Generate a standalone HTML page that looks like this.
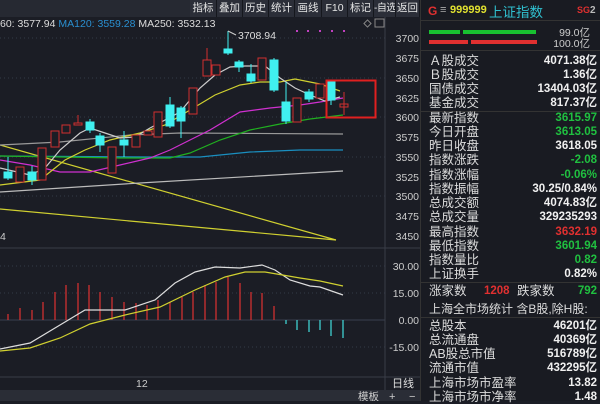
<!DOCTYPE html>
<html><head><meta charset="utf-8"><style>
*{margin:0;padding:0;box-sizing:border-box}
body{width:600px;height:401px;background:#1b1d25;overflow:hidden;position:relative;font-family:"Liberation Sans","Noto Sans CJK SC",sans-serif}
.t{position:absolute;white-space:nowrap}
.btn{position:absolute;top:0;height:17px;background:#2b2e38;color:#e6e6e6;font-size:10.5px;line-height:17px;text-align:center;border-right:1px solid #15171d;overflow:hidden;white-space:nowrap}
.rp{position:absolute;left:420px;top:0;width:180px;height:401px;background:#191b22;border-left:1px solid #333}
.row{position:absolute;left:8px;width:168px;font-size:12.5px;color:#dcdcdc;height:14px;line-height:14px}
.row b{position:absolute;right:0;top:0;font-weight:bold;color:#f0f0f0;font-size:11.5px}
</style></head><body>
<div style="position:absolute;left:0;top:0;width:420px;height:17px;background:#262932"></div>
<div class="btn" style="left:190px;width:27px">指标</div>
<div class="btn" style="left:217px;width:26px">叠加</div>
<div class="btn" style="left:243px;width:26px">历史</div>
<div class="btn" style="left:269px;width:26px">统计</div>
<div class="btn" style="left:295px;width:27px">画线</div>
<div class="btn" style="left:322px;width:26px">F10</div>
<div class="btn" style="left:348px;width:26px">标记</div>
<div class="btn" style="left:374px;width:22px;font-size:10px;letter-spacing:-0.5px">-自选</div>
<div class="btn" style="left:396px;width:24px">返回</div>
<div class="t" style="left:0;top:18px;font-size:10.5px;color:#ddd">60: 3577.94 <span style="color:#2a8fd0">MA120: 3559.28</span> MA250: 3532.13</div>
<svg width="420" height="401" style="position:absolute;left:0;top:0" xmlns="http://www.w3.org/2000/svg">
<g stroke="#333a48" stroke-dasharray="1,3" stroke-width="1">
<line x1="0" y1="38" x2="385" y2="38"/><line x1="0" y1="78" x2="385" y2="78"/><line x1="0" y1="117" x2="385" y2="117"/><line x1="0" y1="157" x2="385" y2="157"/><line x1="0" y1="196" x2="385" y2="196"/>
<line x1="0" y1="266" x2="385" y2="266"/><line x1="0" y1="293" x2="385" y2="293"/><line x1="0" y1="347" x2="385" y2="347"/>
</g>
<line x1="0" y1="320" x2="385" y2="320" stroke="#3a404e"/>
<line x1="385" y1="17" x2="385" y2="390" stroke="#3a3d48"/>
<line x1="0" y1="248" x2="420" y2="248" stroke="#3a3d48"/>
<line x1="0" y1="377" x2="420" y2="377" stroke="#3a3d48"/>
<rect x="0" y="390" width="420" height="11" fill="#2a2d36"/>
<g fill="none" stroke-width="1.2">
<polyline stroke="#d0d030" points="0,145 336,240"/>
<polyline stroke="#d0d030" points="0,209 336,240"/>
<polyline stroke="#bbb" points="0,192 140,183 343,171"/>
<polyline stroke="#999" points="0,145 60,142 130,135 180,133 343,134"/>
<polyline stroke="#1a8fc0" points="0,156 150,157 200,157 250,152 300,150 343,150"/>
<polyline stroke="#20b020" points="0,156 60,157 120,158 170,158 190,153 220,140 250,130 280,124 310,119 343,115"/>
<polyline stroke="#d030d0" points="0,160 30,165 60,172 90,172 120,165 150,158 170,150 190,140 210,130 240,112 270,108 300,105 320,102 343,98"/>
<polyline stroke="#d0d030" points="0,185 40,180 65,160 85,150 110,140 140,133 165,125 190,110 215,95 240,85 260,82 280,82 295,79 320,84 340,91"/>
<polyline stroke="#ccc" points="0,168 30,175 45,168 60,150 80,133 90,128 105,133 120,138 135,137 150,128 165,120 180,112 190,100 200,88 215,75 230,67 245,66 265,66 280,78 295,88 310,95 325,101 340,97"/>
</g>
<g stroke-width="1">
<g stroke="#d03030" fill="#1b1d25">
<rect x="16" y="167" width="8" height="15"/><rect x="38" y="148" width="8" height="32"/><rect x="51" y="131" width="8" height="16"/><rect x="62" y="125" width="8" height="8"/><rect x="74" y="123" width="8" height="2"/><line x1="78" y1="115" x2="78" y2="123"/>
<rect x="108" y="147" width="8" height="26"/><rect x="132" y="135" width="8" height="12"/><rect x="144" y="131" width="8" height="4"/><rect x="154" y="112" width="8" height="25"/>
<rect x="189" y="88" width="8" height="26"/><rect x="203" y="60" width="8" height="16"/><line x1="207" y1="48" x2="207" y2="60"/><rect x="212" y="65" width="8" height="10"/>
<rect x="258" y="58" width="8" height="22"/><rect x="293" y="98" width="8" height="24"/><rect x="316" y="84" width="8" height="14"/><rect x="340" y="104" width="8" height="3"/><line x1="344" y1="92" x2="344" y2="115"/>
</g>
<g stroke="#40f0f0" fill="#40f0f0">
<line x1="8" y1="157" x2="8" y2="180"/><rect x="4" y="172" width="8" height="6"/>
<line x1="32" y1="166" x2="32" y2="185"/><rect x="28" y="172" width="8" height="8"/>
<line x1="90" y1="119" x2="90" y2="133"/><rect x="86" y="122" width="8" height="8"/>
<line x1="100" y1="133" x2="100" y2="152"/><rect x="96" y="136" width="8" height="9"/>
<line x1="124" y1="131" x2="124" y2="157"/><rect x="120" y="140" width="8" height="5"/>
<line x1="170" y1="97" x2="170" y2="128"/><rect x="166" y="105" width="8" height="21"/>
<line x1="181" y1="106" x2="181" y2="138"/><rect x="177" y="108" width="8" height="13"/>
<line x1="228" y1="31" x2="228" y2="55"/><rect x="224" y="49" width="8" height="4"/>
<line x1="239" y1="60" x2="239" y2="72"/><rect x="235" y="62" width="8" height="5"/>
<line x1="251" y1="64" x2="251" y2="83"/><rect x="247" y="74" width="8" height="7"/>
<line x1="274" y1="58" x2="274" y2="92"/><rect x="270" y="60" width="8" height="30"/>
<line x1="286" y1="82" x2="286" y2="124"/><rect x="282" y="102" width="8" height="19"/>
<line x1="309" y1="89" x2="309" y2="102"/><rect x="305" y="92" width="8" height="7"/>
<line x1="331" y1="80" x2="331" y2="105"/><rect x="327" y="82" width="8" height="18"/>
</g>
</g>
<polyline fill="none" stroke="#ccc" points="228,31 232,33 236,35"/>
<text x="238" y="39" fill="#ddd" font-size="10.5" font-family="Liberation Sans">3708.94</text>
<rect x="326.5" y="80.5" width="49" height="37" fill="none" stroke="#e02020" stroke-width="2"/>
<g fill="#c040c0"><rect x="296" y="30" width="2" height="2"/><rect x="307" y="30" width="2" height="2"/><rect x="319" y="30" width="2" height="2"/><rect x="331" y="30" width="2" height="2"/><rect x="343" y="30" width="2" height="2"/></g>
<rect x="365" y="21" width="5" height="5" fill="none" stroke="#888" transform="rotate(45 367.5 23.5)"/>
<rect x="375" y="19" width="9" height="8" fill="none" stroke="#888"/>
<g stroke-width="1.3">
<g stroke="#d03030">
<line x1="8" y1="320" x2="8" y2="314"/><line x1="20" y1="320" x2="20" y2="308"/><line x1="32" y1="320" x2="32" y2="310"/><line x1="43" y1="320" x2="43" y2="302"/><line x1="55" y1="320" x2="55" y2="292"/><line x1="66" y1="320" x2="66" y2="285"/><line x1="78" y1="320" x2="78" y2="283"/><line x1="89" y1="320" x2="89" y2="285"/><line x1="100" y1="320" x2="100" y2="292"/><line x1="112" y1="320" x2="112" y2="297"/><line x1="124" y1="320" x2="124" y2="302"/><line x1="136" y1="320" x2="136" y2="303"/><line x1="147" y1="320" x2="147" y2="305"/><line x1="158" y1="320" x2="158" y2="300"/><line x1="170" y1="320" x2="170" y2="302"/><line x1="182" y1="320" x2="182" y2="297"/><line x1="193" y1="320" x2="193" y2="292"/><line x1="205" y1="320" x2="205" y2="285"/><line x1="216" y1="320" x2="216" y2="282"/><line x1="228" y1="320" x2="228" y2="277"/><line x1="240" y1="320" x2="240" y2="283"/><line x1="251" y1="320" x2="251" y2="292"/><line x1="262" y1="320" x2="262" y2="293"/><line x1="274" y1="320" x2="274" y2="306"/>
</g>
<g stroke="#40d0d0">
<line x1="286" y1="320" x2="286" y2="324"/><line x1="297" y1="320" x2="297" y2="330"/><line x1="309" y1="320" x2="309" y2="332"/><line x1="320" y1="320" x2="320" y2="330"/><line x1="331" y1="320" x2="331" y2="336"/><line x1="343" y1="320" x2="343" y2="338"/>
</g>
</g>
<polyline fill="none" stroke="#ddd" stroke-width="1.2" points="0,349 30,343 60,325 85,310 125,310 155,300 175,283 195,272 215,267 240,268 262,265 275,270 290,280 310,286 320,287 343,295"/>
<polyline fill="none" stroke="#d0d030" stroke-width="1.2" points="0,351 30,348 60,338 90,324 125,315 160,307 195,290 225,277 245,272 265,272 300,278 320,281 343,286"/>
<g fill="#ccc" font-size="10.5" font-family="Liberation Sans" text-anchor="end">
<text x="419" y="42">3700</text><text x="419" y="62">3675</text><text x="419" y="82">3650</text><text x="419" y="102">3625</text>
<text x="419" y="121">3600</text><text x="419" y="141">3575</text><text x="419" y="161">3550</text><text x="419" y="181">3525</text><text x="419" y="200">3500</text><text x="419" y="220">3475</text><text x="419" y="240">3450</text>
<text x="419" y="270">30.00</text><text x="419" y="297">15.00</text><text x="419" y="324">0.00</text><text x="419" y="351">-15.00</text>
</g>
<text x="0" y="240" fill="#ccc" font-size="10.5" font-family="Liberation Sans">4</text>
<text x="136" y="387" fill="#ccc" font-size="10.5" font-family="Liberation Sans">12</text>
<text x="392" y="387" fill="#ddd" font-size="11" font-family="Liberation Sans,Noto Sans CJK SC">日线</text>
<text x="358" y="400" fill="#ccc" font-size="10.5" font-family="Liberation Sans,Noto Sans CJK SC">模板</text>
<text x="389" y="400" fill="#ccc" font-size="11" font-family="Liberation Sans">+</text>
<text x="409" y="400" fill="#ccc" font-size="11" font-family="Liberation Sans">−</text>
</svg>
<div class="rp">
<div class="t" style="left:7px;top:4px;color:#e03030;font-size:12px;font-weight:bold">G</div>
<div class="t" style="left:19px;top:4px;color:#aaa;font-size:11px">≡</div>
<div class="t" style="left:29px;top:4px;color:#e0e030;font-size:11px;font-weight:bold">999999</div>
<div class="t" style="left:68px;top:1px;color:#30c0d0;font-size:13.5px">上证指数</div>
<div class="t" style="left:156px;top:5px;color:#e03030;font-size:9px;font-weight:bold">SG<span style="color:#bbb;font-size:10px">2</span></div>
<div style="position:absolute;left:0;top:20px;width:180px;height:1px;background:#333"></div>
<div style="position:absolute;left:8px;top:30px;width:31px;height:4px;background:#18c030"></div>
<div style="position:absolute;left:42px;top:30px;width:73px;height:4px;background:#18c030"></div>
<div style="position:absolute;left:8px;top:40px;width:39px;height:4px;background:#e03030"></div>
<div style="position:absolute;left:50px;top:40px;width:66px;height:4px;background:#e03030"></div>
<div class="t" style="right:10px;top:25px;color:#ccc;font-size:10.5px">99.0亿</div>
<div class="t" style="right:10px;top:36px;color:#ccc;font-size:10.5px">100.0亿</div>
<div style="position:absolute;left:0;top:50px;width:180px;height:1px;background:#333"></div>
<div class="row" style="top:54px">Ａ股成交<b>4071.38亿</b></div>
<div class="row" style="top:68px">Ｂ股成交<b>1.36亿</b></div>
<div class="row" style="top:82px">国债成交<b>13404.03亿</b></div>
<div class="row" style="top:96px">基金成交<b>817.37亿</b></div>
<div style="position:absolute;left:0;top:111px;width:180px;height:1px;background:#333"></div>
<div class="row" style="top:111px">最新指数<b style="color:#20c040">3615.97</b></div>
<div class="row" style="top:125px">今日开盘<b style="color:#20c040">3613.05</b></div>
<div class="row" style="top:139px">昨日收盘<b>3618.05</b></div>
<div class="row" style="top:153px">指数涨跌<b style="color:#20c040">-2.08</b></div>
<div class="row" style="top:168px">指数涨幅<b style="color:#20c040">-0.06%</b></div>
<div class="row" style="top:182px">指数振幅<b>30.25/0.84%</b></div>
<div class="row" style="top:196px">总成交额<b>4074.83亿</b></div>
<div class="row" style="top:210px">总成交量<b>329235293</b></div>
<div class="row" style="top:225px">最高指数<b style="color:#e03030">3632.19</b></div>
<div class="row" style="top:239px">最低指数<b style="color:#20c040">3601.94</b></div>
<div class="row" style="top:253px">指数量比<b style="color:#20c040">0.82</b></div>
<div class="row" style="top:267px">上证换手<b>0.82%</b></div>
<div style="position:absolute;left:0;top:282px;width:180px;height:1px;background:#333"></div>
<div class="row" style="top:284px">涨家数<span style="position:absolute;left:55px;color:#e03030;font-weight:bold;font-size:11.5px">1208</span><span style="position:absolute;left:88px">跌家数</span><b style="color:#20c040">792</b></div>
<div class="row" style="top:302px;font-size:12px">上海全市场统计 含B股,除H股:</div>
<div style="position:absolute;left:0;top:317px;width:180px;height:1px;background:#333"></div>
<div class="row" style="top:319px">总股本<b>46201亿</b></div>
<div class="row" style="top:333px">总流通盘<b>40369亿</b></div>
<div class="row" style="top:347px">AB股总市值<b>516789亿</b></div>
<div class="row" style="top:361px">流通市值<b>432295亿</b></div>
<div class="row" style="top:376px">上海市场市盈率<b>13.82</b></div>
<div class="row" style="top:390px">上海市场市净率<b>1.48</b></div>
</div>
</body></html>
